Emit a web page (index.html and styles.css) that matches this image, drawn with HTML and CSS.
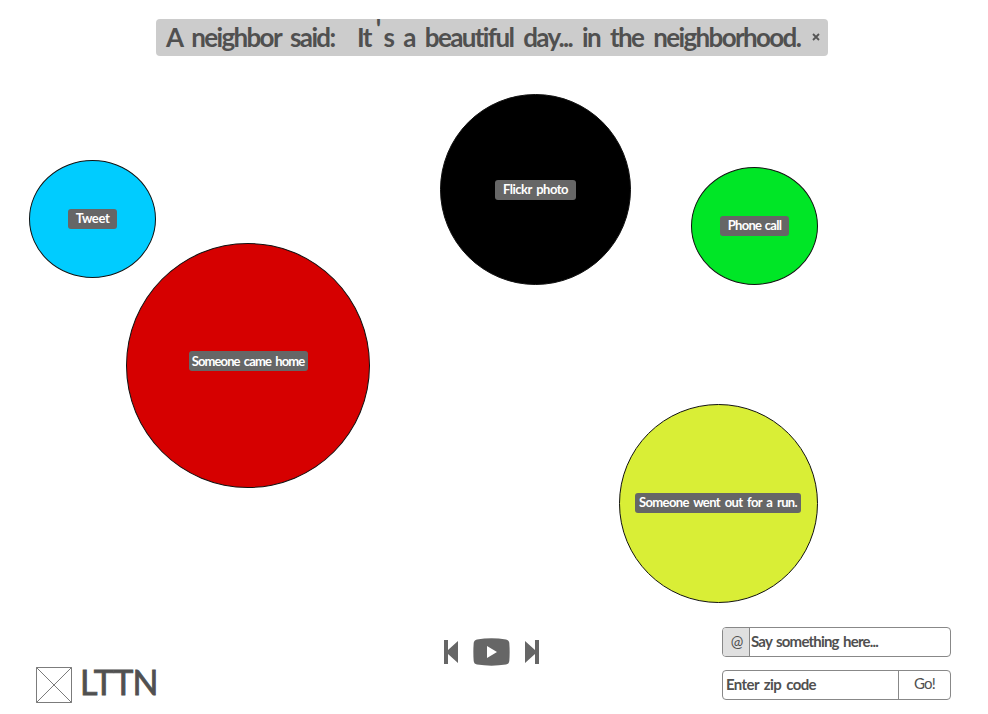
FILE: index.html
```html
<!DOCTYPE html>
<html lang="en">
<head>
<meta charset="utf-8">
<title>LTTN</title>
<link rel="stylesheet" href="styles.css">
</head>
<body>
<div class="page">
  <header class="alert">
    <span class="alert-who">A neighbor said:</span>
    <span class="alert-text">It<span class="apostrophe">'</span>s a beautiful day... in the neighborhood.</span>
    <svg class="close" viewBox="0 0 8 8"><path d="M1 1L7 7M7 1L1 7"/></svg>
  </header>

  <main class="canvas">
    <div class="bubble tweet"><span class="tag">Tweet</span></div>
    <div class="bubble home"><span class="tag">Someone came home</span></div>
    <div class="bubble flickr"><span class="tag">Flickr photo</span></div>
    <div class="bubble phone"><span class="tag">Phone call</span></div>
    <div class="bubble run"><span class="tag">Someone went out for a run.</span></div>
  </main>

  <footer class="footer">
    <div class="brand">
      <svg class="placeholder" viewBox="0 0 37 37"><path d="M.5 .5H36.5V36.5H.5ZM.5 .5L36.5 36.5M36.5 .5L.5 36.5"/></svg>
      <span class="logo">LTTN</span>
    </div>
    <div class="player">
      <svg width="16" height="26" viewBox="0 0 16 26"><path d="M1 1H5V11L15 2V24L5 15V25H1Z"/></svg>
      <svg width="37" height="28" viewBox="0 0 37 28"><path fill-rule="evenodd" d="M4 1.500Q18.500 -.8 33 1.500Q36 2 36.300 5Q37 14 36.300 23Q36 26 33 26.500Q18.500 28.800 4 26.500Q1 26 .7 23Q0 14 .7 5Q1 2 4 1.500ZM14 8V20L24 14Z"/></svg>
      <svg width="16" height="26" viewBox="0 0 16 26"><path d="M15 1H11V11L1 2V24L11 15V25H15Z"/></svg>
    </div>
    <div class="forms">
      <div class="field">
        <span class="at">@</span>
        <span class="say">Say something here...</span>
      </div>
      <div class="field">
        <span class="zip">Enter zip code</span>
        <span class="go">Go!</span>
      </div>
    </div>
  </footer>
</div>
</body>
</html>
```
FILE: styles.css
```css
* { box-sizing: border-box; }
body {
  margin: 0;
  background: #fff;
  color: #505050;
  font-family: Lato, "Liberation Sans", sans-serif;
}
.page {
  position: relative;
  width: 988px;
  height: 714px;
  padding-top: 19px;
  display: flex;
  flex-direction: column;
  justify-content: space-between;
  overflow: hidden;
}
.alert {
  position: relative;
  z-index: 1;
  width: 672px;
  height: 37px;
  margin-left: 156px;
  padding: 0 8px 2px 10px;
  display: flex;
  align-items: center;
  background: #ccc;
  border-radius: 4px;
  font-size: 26px;
  font-weight: 700;
  line-height: 34px;
  letter-spacing: -1.65px;
  white-space: nowrap;
}
.alert-who { width: 191px; word-spacing: 5px; }
.alert-text { width: 455px; word-spacing: 5.3px; }
.apostrophe { position: relative; top: -9px; margin: 0 4px 0 5px; }
.close { width: 8px; height: 8px; flex: none; fill: none; stroke: #555; stroke-width: 1.800; }

.canvas { position: absolute; inset: 0; }
.bubble {
  position: absolute;
  display: flex;
  align-items: center;
  justify-content: center;
  border: 1px solid #111;
  border-radius: 50%;
}
.tweet { left: 29px; top: 160px; width: 127px; height: 118px; background: #00ccff; }
.home { left: 126px; top: 243px; width: 244px; height: 245px; padding-bottom: 9px; background: #d60000; }
.flickr { left: 440px; top: 94px; width: 191px; height: 191px; background: #000; }
.phone { left: 691px; top: 167px; width: 127px; height: 118px; background: #00e626; }
.run { left: 619px; top: 404px; width: 199px; height: 199px; padding: 0 1px 1px 0; background: #d9ee36; }
.tag {
  height: 20px;
  border-radius: 3px;
  background: #666;
  color: #fff;
  font-size: 13px;
  font-weight: 700;
  line-height: 18px;
  text-align: center;
  white-space: nowrap;
}
.tweet .tag { width: 49px; letter-spacing: -.4px; }
.home .tag { width: 119px; letter-spacing: -.9px; word-spacing: 2px; line-height: 20px; }
.flickr .tag { width: 81px; letter-spacing: -.5px; word-spacing: 2px; }
.phone .tag { width: 69px; letter-spacing: -.7px; word-spacing: 1px; }
.run .tag { width: 166px; letter-spacing: -.6px; word-spacing: 2px; }

.footer {
  position: relative;
  height: 87px;
  padding: 0 37px 0 36px;
  display: grid;
  grid-template-columns: 407px 279px 229px;
}
.brand { padding-top: 40px; display: flex; }
.placeholder { width: 36px; height: 36px; fill: none; stroke: #777; stroke-width: 1; }
.logo {
  margin: -5px 0 0 8px;
  font-size: 34px;
  font-weight: 400;
  line-height: 40px;
  letter-spacing: -.6px;
  -webkit-text-stroke: .8px #505050;
}
.player { height: 49px; display: flex; align-items: center; gap: 14px; fill: #666; }
.forms { display: flex; flex-direction: column; gap: 13px; }
.field {
  width: 229px;
  height: 30px;
  display: flex;
  border: 1px solid #888;
  border-radius: 4px;
  overflow: hidden;
  font-size: 15px;
  font-weight: 700;
  line-height: 27px;
  white-space: nowrap;
}
.at { width: 27px; padding-left: 2px; background: #e0e0e0; border-right: 1px solid #888; text-align: center; font-weight: 400; }
.say { padding-left: 1px; letter-spacing: -.8px; word-spacing: 1.500px; }
.zip { width: 175px; padding-left: 3px; letter-spacing: -.6px; word-spacing: 2px; }
.go { flex: 1; border-left: 1px solid #888; text-align: center; line-height: 24px; font-weight: 400; letter-spacing: -.8px; }
```
